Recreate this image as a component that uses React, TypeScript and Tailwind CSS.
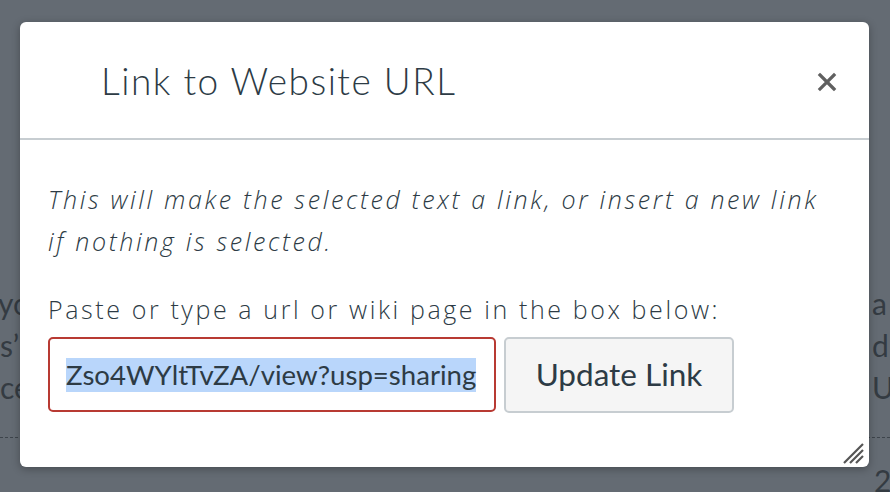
import React from "react";

export default function App() {
  return (
    <div className="relative w-[890px] h-[492px] overflow-hidden bg-[#646b73]" style={{ fontFamily: "Lato, 'Noto Sans', sans-serif" }}>
      {/* faint page behind the overlay */}
      <div className="absolute left-0 top-[282px] flex flex-col text-[30px] leading-[42px] text-[#343b42]">
        <span className="-ml-[2px]">yo</span>
        <span>s’</span>
        <span>ce</span>
      </div>
      <div className="absolute left-[872px] top-[282px] flex flex-col text-[30px] leading-[42px] text-[#343b42]">
        <span>a</span>
        <span>d</span>
        <span>U</span>
      </div>
      <div className="absolute left-0 right-0 top-[437px] border-t border-dashed border-[#3d444b]" />
      <div className="absolute left-[874px] top-[462px] text-[30px] leading-[36px] text-[#343b42]">2</div>

      {/* dialog */}
      <div className="absolute left-[20px] top-[22px] w-[849px] h-[445px] bg-white rounded-[6px] shadow-[0_2px_8px_rgba(0,0,0,0.3)] flex flex-col">
        <div className="h-[118px] border-b-2 border-[#c7cdd1] flex items-center justify-between pl-[81px] pr-[32px]">
          <h1 className="text-[37px] font-light tracking-[1.5px] text-[#2d3b45] pt-[2px]">Link to Website URL</h1>
          <svg width="20" height="20" viewBox="0 0 20 20" className="mt-[4px]">
            <path d="M3 3 L17 17 M17 3 L3 17" stroke="#606060" strokeWidth="3.2" strokeLinecap="square" />
          </svg>
        </div>
        <div className="flex-1 relative px-[28px] pt-[38px]" style={{ fontFamily: "'Open Sans', Lato, sans-serif" }}>
          <p className="italic font-light text-[25px] leading-[42px] tracking-[2.65px] text-[#2d3b45] whitespace-nowrap">
            This will make the selected text a link, or insert a new link<br />if nothing is selected.
          </p>
          <p className="mt-[26px] font-light text-[25px] leading-[42px] tracking-[2.6px] text-[#2d3b45] whitespace-nowrap">
            Paste or type a url or wiki page in the box below:
          </p>
          <div className="mt-[7px] flex gap-[8px]" style={{ fontFamily: "Lato, sans-serif" }}>
            <div className="w-[448px] h-[75px] border-2 border-[#b83a33] rounded-[5px] flex items-center pl-[16px] overflow-hidden">
              <span className="bg-[#b9d6fb] text-[27.6px] leading-[34px] text-[#2d3b45] whitespace-nowrap">Zso4WYltTvZA/view?usp=sharing</span>
            </div>
            <button className="w-[230px] h-[76px] bg-[#f5f5f5] border-2 border-[#c7cdd1] rounded-[5px] text-[31.5px] text-[#2d3b45]">
              Update Link
            </button>
          </div>
          <svg width="22" height="22" viewBox="0 0 22 22" className="absolute right-[5px] bottom-[3px]">
            <path d="M21 2 L2 21 M21 8 L8 21 M21 14 L14 21" stroke="#555" strokeWidth="2.2" />
          </svg>
        </div>
      </div>
    </div>
  );
}
